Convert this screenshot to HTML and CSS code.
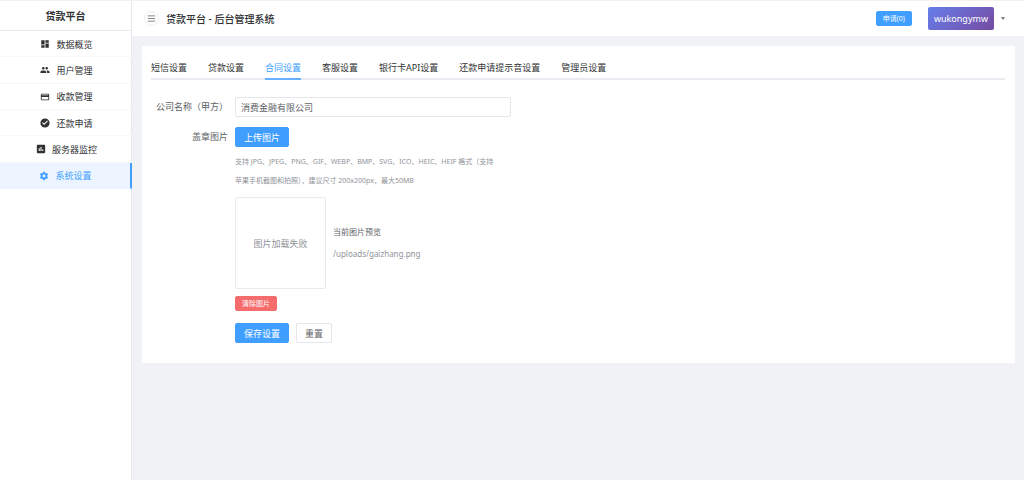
FILE: index.html
```html
<!DOCTYPE html>
<html lang="zh-CN">
<head>
  <meta charset="UTF-8">
  <meta name="viewport" content="width=device-width, initial-scale=1">
  <title>贷款平台 - 后台管理系统</title>
  <link rel="stylesheet" href="styles.css">
</head>
<body>
  <div class="layout">
    <aside class="sidebar">
      <div class="logo">贷款平台</div>
      <nav class="menu">
        <a href="#overview"><svg viewBox="0 0 24 24"><path d="M3 13h8V3H3v10zm0 8h8v-6H3v6zm10 0h8V11h-8v10zm0-18v6h8V3h-8z"/></svg>数据概览</a>
        <a href="#users"><svg viewBox="0 0 24 24"><path d="M16 11c1.660 0 2.990-1.340 2.990-3S17.660 5 16 5s-3 1.340-3 3 1.340 3 3 3zm-8 0c1.660 0 2.990-1.340 2.990-3S9.660 5 8 5 5 6.340 5 8s1.340 3 3 3zm0 2c-2.330 0-7 1.170-7 3.500V19h14v-2.500c0-2.330-4.670-3.500-7-3.500zm8 0c-.29 0-.62.02-.97.05 1.160.84 1.970 1.970 1.970 3.450V19h6v-2.500c0-2.330-4.670-3.500-7-3.500z"/></svg>用户管理</a>
        <a href="#receipts"><svg viewBox="0 0 24 24"><path d="M20 4H4c-1.110 0-2 .89-2 2v12c0 1.110.89 2 2 2h16c1.110 0 2-.89 2-2V6c0-1.110-.89-2-2-2zm0 14H4v-6h16v6zm0-10H4V6h16v2z"/></svg>收款管理</a>
        <a href="#repayments"><svg viewBox="0 0 24 24"><path d="M12 1a11 11 0 1 0 0 22 11 11 0 0 0 0-22zm-2 16l-5-5 1.800-1.800 3.200 3.200 7.200-7.200L19 8l-9 9z"/></svg>还款申请</a>
        <a href="#monitor"><svg viewBox="0 0 24 24"><path d="M20 2H4a2 2 0 0 0-2 2v16a2 2 0 0 0 2 2h16a2 2 0 0 0 2-2V4a2 2 0 0 0-2-2zM9 17H6.500v-7H9v7zm4.300 0h-2.600V7h2.600v10zm4.200 0H15v-4h2.500v4z"/></svg>服务器监控</a>
        <a href="#settings" class="active"><svg viewBox="0 0 24 24"><path d="M19.430 12.980c.04-.32.07-.64.07-.98s-.03-.66-.07-.98l2.110-1.650c.19-.15.24-.42.12-.64l-2-3.460c-.12-.22-.39-.3-.61-.22l-2.490 1c-.52-.4-1.080-.73-1.690-.98l-.38-2.650C14.460 2.180 14.250 2 14 2h-4c-.25 0-.46.18-.49.42l-.38 2.650c-.61.25-1.170.59-1.690.98l-2.490-1c-.23-.09-.49 0-.61.22l-2 3.460c-.13.22-.07.49.12.64l2.110 1.650c-.04.32-.07.65-.07.98s.03.66.07.98l-2.110 1.650c-.19.15-.24.42-.12.64l2 3.460c.12.22.39.3.61.22l2.490-1c.52.4 1.080.73 1.690.98l.38 2.650c.03.24.24.42.49.42h4c.25 0 .46-.18.49-.42l.38-2.650c.61-.25 1.170-.59 1.690-.98l2.490 1c.23.09.49 0 .61-.22l2-3.460c.12-.22.07-.49-.12-.64l-2.110-1.650zM12 15.500a3.500 3.500 0 1 1 0-7 3.500 3.500 0 0 1 0 7z"/></svg>系统设置</a>
      </nav>
    </aside>

    <div class="main">
      <header class="header">
        <button class="btn-fold" aria-label="折叠菜单"><svg viewBox="0 0 24 24"><path d="M2 5h20M2 12h20M2 19h20"/></svg></button>
        <h1>贷款平台 - 后台管理系统</h1>
        <button class="btn btn-primary btn-small">申请(0)</button>
        <button class="btn-user">wukongymw</button>
        <button class="btn-caret" aria-label="用户菜单"><svg viewBox="0 0 8 5"><path d="M0 0h8L4 5z"/></svg></button>
      </header>

      <main class="card">
        <div class="tabs" role="tablist">
          <button role="tab">短信设置</button>
          <button role="tab">贷款设置</button>
          <button role="tab" class="active" aria-selected="true">合同设置</button>
          <button role="tab">客服设置</button>
          <button role="tab">银行卡API设置</button>
          <button role="tab">还款申请提示音设置</button>
          <button role="tab">管理员设置</button>
        </div>

        <form class="form">
          <label for="company">公司名称（甲方）</label>
          <input type="text" id="company" value="消费金融有限公司">

          <label for="upload">盖章图片</label>
          <div class="field">
            <button type="button" id="upload" class="btn btn-primary">上传图片</button>
            <p class="hint">支持 JPG、JPEG、PNG、GIF、WEBP、BMP、SVG、ICO、HEIC、HEIF 格式（支持<br>苹果手机截图和拍照），建议尺寸 200x200px，最大50MB</p>
            <div class="preview">
              <div class="preview-box">图片加载失败</div>
              <div class="preview-info">
                <p>当前图片预览</p>
                <p class="path">/uploads/gaizhang.png</p>
              </div>
            </div>
            <button type="button" class="btn btn-danger btn-small">清除图片</button>
          </div>

          <div class="actions">
            <button type="submit" class="btn btn-primary">保存设置</button>
            <button type="reset" class="btn">重置</button>
          </div>
        </form>
      </main>
    </div>
  </div>
</body>
</html>
```
FILE: styles.css
```css
* { box-sizing: border-box; }
body { margin: 0; font-family: "Noto Sans", "Noto Sans CJK SC", sans-serif; font-size: 9px; color: #303133; background: #f0f2f5; }
button, input { font-family: inherit; font-size: inherit; color: inherit; }
button { cursor: pointer; }
p, h1 { margin: 0; }
svg { fill: currentColor; flex: none; }

.layout { display: flex; min-height: 100vh; border-top: 1px solid #f8eff1; }

/* 侧边栏 */
.sidebar { width: 132px; flex: none; background: #fff; border-right: 1px solid #e6e8ec; }
.logo { height: 30px; line-height: 30px; border-bottom: 1px solid #e9ebef; text-align: center; font-size: 10px; font-weight: bold; }
.menu { display: grid; grid-auto-rows: 1fr; height: 158px; margin-right: -1px; }
.menu a { display: flex; align-items: center; justify-content: center; gap: 6px; padding: 1px 0 0 1px; border-bottom: 1px solid #f7f8fa; color: #303133; text-decoration: none; }
.menu svg { width: 10px; height: 10px; }
.menu a.active { background: #ecf5ff; color: #409eff; border-bottom-color: #ecf5ff; border-right: 2px solid #409eff; }

.main { flex: 1; min-width: 0; }
.header { display: flex; align-items: center; height: 35px; padding: 0 19px 0 12px; background: #fff; }
.header h1 { flex: 1; margin-left: 7px; font-size: 10px; font-weight: 500; }
.btn-fold { display: flex; align-items: center; justify-content: center; width: 15px; height: 15px; padding: 0; border: 1px solid #eceef1; border-radius: 50%; background: #fff; }
.btn-fold svg { width: 9px; height: 9px; fill: none; stroke: #606266; stroke-width: 2; }
.btn-user { height: 23px; margin-left: 16px; padding: 0 6px; border: none; border-radius: 2px; background: linear-gradient(135deg, #667eea, #764ba2); color: #fff; }
.btn-caret { display: flex; margin-left: 7px; padding: 0; border: none; background: none; color: #606266; }
.btn-caret svg { width: 4px; height: 3px; }

.btn { height: 20px; padding: 0 8px; border: 1px solid #e4e7ed; border-radius: 2px; background: #fff; color: #606266; line-height: 1; }
.btn-primary { background: #409eff; border-color: #409eff; color: #fff; }
.btn-danger { background: #f56c6c; border-color: #f56c6c; color: #fff; }
.btn-small { height: 15px; padding: 0 6px; font-size: 7px; }

.card { margin: 10px 9px 0 10px; padding: 9px 10px 20px 9px; background: #fff; }
.tabs { display: flex; gap: 21px; border-bottom: 2px solid #e9ebf1; }
.tabs button { height: 25px; margin-bottom: -2px; padding: 2px 0 0; border: none; border-bottom: 2px solid transparent; background: none; white-space: nowrap; }
.tabs button.active { color: #409eff; border-bottom-color: #66b1ff; }

/* 合同设置表单 */
.form { display: grid; grid-template-columns: 77px minmax(0, 276px); column-gap: 7px; row-gap: 10px; margin-top: 17px; color: #606266; }
.form label { line-height: 20px; text-align: right; white-space: nowrap; }
.form input { width: 100%; height: 20px; padding: 0 5px; border: 1px solid #e4e7ed; border-radius: 2px; }
.field { display: flex; flex-direction: column; align-items: flex-start; }
.hint { margin: 5px 0 7px; font-size: 7px; line-height: 19px; color: #909399; white-space: nowrap; }
.preview { display: flex; align-items: center; gap: 7px; margin-bottom: 7px; }
.preview-box { display: flex; align-items: center; justify-content: center; width: 91px; height: 92px; border: 1px solid #e9ebf1; border-radius: 2px; color: #909399; }
.preview-info { font-size: 8px; line-height: 22px; }
.path { color: #909399; }
.actions { grid-column: 2; display: flex; gap: 7px; margin-top: 2px; }
```
